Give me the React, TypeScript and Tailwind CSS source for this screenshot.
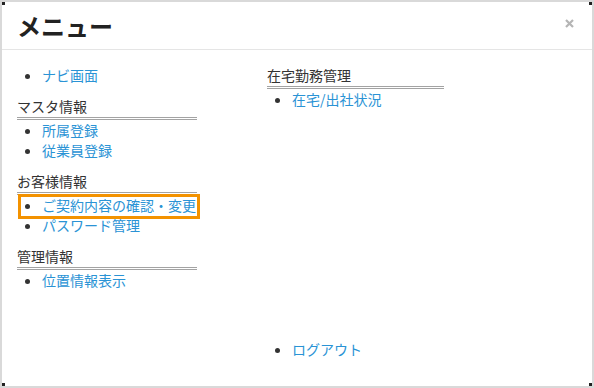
import React from "react";

const font = { fontFamily: '"Noto Sans CJK JP", "Noto Sans", sans-serif' };

function Heading({ children }: { children: React.ReactNode }) {
  return (
    <div className="mt-[11px] h-[24px] border-b-[3px] border-double border-[#a3a3a3] text-[14px] leading-[20px] text-[#333]">
      {children}
    </div>
  );
}

function Item({ children, boxed }: { children: React.ReactNode; boxed?: boolean }) {
  return (
    <li className="relative h-[20px] text-[14px] leading-[20px]">
      <a className="text-[#2a93d5]">{children}</a>
      {boxed && (
        <span className="pointer-events-none absolute left-[-24px] top-[-1px] h-[25px] w-[182px] border-[3px] border-[#f39200]" />
      )}
    </li>
  );
}

export default function App() {
  return (
    <div className="h-[388px] w-[594px] bg-[#d9d9d9] p-[2px]" style={font}>
      <div className="relative flex h-[384px] w-[590px] flex-col bg-white">
        <span className="absolute left-0 top-0 h-0 w-0 border-l-[3px] border-t-[3px] border-l-[#222] border-t-[#222] border-r-transparent border-b-transparent" />
        <span className="absolute right-0 top-0 h-0 w-0 border-r-[3px] border-t-[3px] border-r-[#222] border-t-[#222]" />
        <span className="absolute bottom-0 left-0 h-0 w-0 border-b-[3px] border-l-[3px] border-b-[#222] border-l-[#222]" />
        <span className="absolute bottom-0 right-0 h-0 w-0 border-b-[3px] border-r-[3px] border-b-[#222] border-r-[#222]" />
        <div className="flex h-[48px] items-center justify-between border-b border-[#e5e5e5] pl-[15px] pr-[18px]">
          <div className="text-[24px] font-bold leading-[26px] text-[#222]">メニュー</div>
          <svg width="9" height="9" viewBox="0 0 9 9" className="mb-[5px]">
            <path d="M1 1 L8 8 M8 1 L1 8" stroke="#b5b5b5" strokeWidth="2.2" strokeLinecap="butt" />
          </svg>
        </div>
        <div className="flex flex-1 px-[15px] pt-[15px]">
          <div className="w-[180px]">
            <ul className="list-disc pl-[25px] marker:text-[#333]">
              <Item>ナビ画面</Item>
            </ul>
            <Heading>マスタ情報</Heading>
            <ul className="list-disc pl-[25px] marker:text-[#333]">
              <Item>所属登録</Item>
              <Item>従業員登録</Item>
            </ul>
            <Heading>お客様情報</Heading>
            <ul className="list-disc pl-[25px] marker:text-[#333]">
              <Item boxed>ご契約内容の確認・変更</Item>
              <Item>パスワード管理</Item>
            </ul>
            <Heading>管理情報</Heading>
            <ul className="list-disc pl-[25px] marker:text-[#333]">
              <Item>位置情報表示</Item>
            </ul>
          </div>
          <div className="ml-[70px] flex w-[177px] flex-col">
            <div className="h-[24px] border-b-[3px] border-double border-[#a3a3a3] text-[14px] leading-[20px] text-[#333]">
              在宅勤務管理
            </div>
            <ul className="list-disc pl-[25px] marker:text-[#333]">
              <Item>在宅/出社状況</Item>
            </ul>
            <ul className="mt-[230px] list-disc pl-[25px] marker:text-[#333]">
              <Item>ログアウト</Item>
            </ul>
          </div>
        </div>
      </div>
    </div>
  );
}
